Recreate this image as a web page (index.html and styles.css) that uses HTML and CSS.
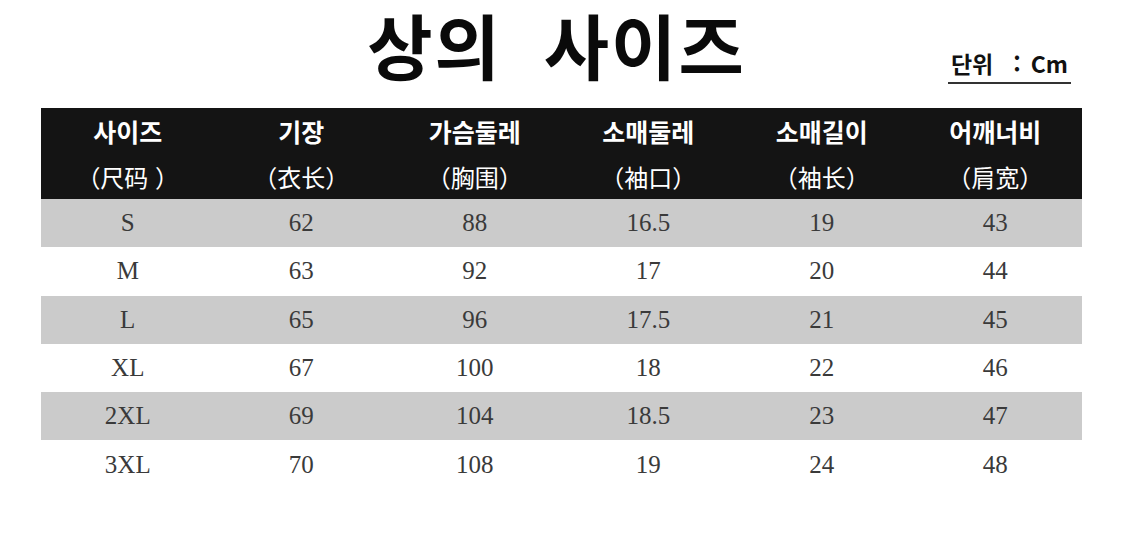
FILE: index.html
```html
<!DOCTYPE html>
<html lang="ko">
<head>
<meta charset="utf-8">
<link rel="stylesheet" href="styles.css">
</head>
<body>
<div class="page">
  <div class="top">
    <div></div>
    <h1 class="title">상의 사이즈</h1>
    <div class="unit-wrap"><span class="unit">단위<span class="gap"></span>:<span class="gap2"></span>Cm</span></div>
  </div>
  <div class="table">
    <div class="row head">
      <div class="cell"><span class="ko">사이즈</span><span class="zh">（尺码 ）</span></div>
      <div class="cell"><span class="ko">기장</span><span class="zh">（衣长）</span></div>
      <div class="cell"><span class="ko">가슴둘레</span><span class="zh">（胸围）</span></div>
      <div class="cell"><span class="ko">소매둘레</span><span class="zh">（袖口）</span></div>
      <div class="cell"><span class="ko">소매길이</span><span class="zh">（袖长）</span></div>
      <div class="cell"><span class="ko">어깨너비</span><span class="zh">（肩宽）</span></div>
    </div>
    <div class="row gray"><div class="cell">S</div><div class="cell">62</div><div class="cell">88</div><div class="cell">16.5</div><div class="cell">19</div><div class="cell">43</div></div>
    <div class="row"><div class="cell">M</div><div class="cell">63</div><div class="cell">92</div><div class="cell">17</div><div class="cell">20</div><div class="cell">44</div></div>
    <div class="row gray"><div class="cell">L</div><div class="cell">65</div><div class="cell">96</div><div class="cell">17.5</div><div class="cell">21</div><div class="cell">45</div></div>
    <div class="row"><div class="cell">XL</div><div class="cell">67</div><div class="cell">100</div><div class="cell">18</div><div class="cell">22</div><div class="cell">46</div></div>
    <div class="row gray"><div class="cell">2XL</div><div class="cell">69</div><div class="cell">104</div><div class="cell">18.5</div><div class="cell">23</div><div class="cell">47</div></div>
    <div class="row"><div class="cell">3XL</div><div class="cell">70</div><div class="cell">108</div><div class="cell">19</div><div class="cell">24</div><div class="cell">48</div></div>
  </div>
</div>
</body>
</html>
```
FILE: styles.css
```css
html, body {
  margin: 0;
  padding: 0;
  background: #ffffff;
}
.page {
  width: 1041px;
  margin-left: 41px;
}
.top {
  height: 108px;
  display: grid;
  grid-template-columns: 1fr auto 1fr;
  align-items: start;
}
.title {
  margin: 0;
  margin-right: 10px;
  font-family: "Noto Sans CJK KR", sans-serif;
  font-weight: 700;
  font-size: 71px;
  line-height: 86px;
  letter-spacing: 2px;
  word-spacing: 20px;
  color: #0a0a0a;
  white-space: nowrap;
}
.unit-wrap {
  display: flex;
  justify-content: flex-end;
  padding-top: 44px;
  padding-right: 11px;
}
.unit {
  display: flex;
  align-items: center;
  font-family: "Noto Sans CJK KR", sans-serif;
  font-weight: 700;
  font-size: 23px;
  line-height: 38px;
  color: #111111;
  padding: 0 3px;
  border-bottom: 2px solid #333333;
}
.unit .gap {
  width: 20px;
}
.unit .gap2 {
  width: 10px;
}
.table {
  display: flex;
  flex-direction: column;
}
.row {
  display: grid;
  grid-template-columns: repeat(6, 1fr);
  height: 48.3px;
  align-items: center;
  font-family: "Liberation Serif", serif;
  font-size: 25px;
  color: #3a3a3a;
}
.row.gray {
  background: #cbcbcb;
}
.cell {
  text-align: center;
}
.row.head {
  height: 91px;
  background: #141414;
  color: #ffffff;
  font-family: "Noto Sans CJK KR", sans-serif;
}
.head .cell {
  display: flex;
  flex-direction: column;
  align-items: center;
}
.head .ko {
  font-weight: 700;
  font-size: 25px;
  line-height: 45px;
}
.head .zh {
  font-family: "Noto Sans CJK SC", sans-serif;
  font-weight: 400;
  font-size: 24px;
  line-height: 45px;
  white-space: pre;
}
```
